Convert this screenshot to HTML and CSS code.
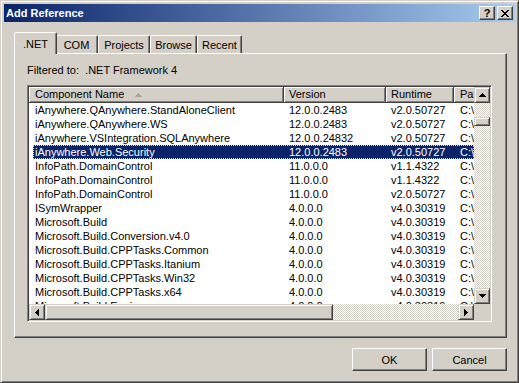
FILE: index.html
```html
<!DOCTYPE html>
<html>
<head>
<meta charset="utf-8">
<title>Add Reference</title>
<link rel="stylesheet" href="styles.css">
</head>
<body>
<div class="window">
  <div class="titlebar">
    <span class="title">Add Reference</span>
    <div class="caption-buttons">
      <div class="cap-btn"><span class="q">?</span></div>
      <div class="cap-btn">
        <svg width="8" height="7" viewBox="0 0 8 7" shape-rendering="crispEdges"><path d="M0 0h2v1H0zM6 0h2v1H6zM1 1h2v1H1zM5 1h2v1H5zM2 2h4v1H2zM3 3h2v1H3zM2 4h4v1H2zM1 5h2v1H1zM5 5h2v1H5zM0 6h2v1H0zM6 6h2v1H6z" fill="#000"/></svg>
      </div>
    </div>
  </div>
  <div class="content">
    <div class="tabs">
      <div class="tab active t-net">.NET</div>
      <div class="tab t-com">COM</div>
      <div class="tab t-proj">Projects</div>
      <div class="tab t-browse">Browse</div>
      <div class="tab t-recent">Recent</div>
    </div>
    <div class="panel">
      <div class="filter">Filtered to:&nbsp; .NET Framework 4</div>
      <div class="listview">
        <div class="lv-content">
          <div class="lv-header">
            <div class="hcell h1">Component Name<svg class="sort" width="7" height="4" viewBox="0 0 7 4" shape-rendering="crispEdges"><path d="M3 0h1v1h1v1h1v1h1v1H0V3h1V2h1V1h1z" fill="#A7A598"/></svg></div>
            <div class="hcell h2">Version</div>
            <div class="hcell h3">Runtime</div>
            <div class="hcell h4">Path</div>
          </div>
          <div class="rows">
            <div class="row"><span class="c1">iAnywhere.QAnywhere.StandAloneClient</span><span class="c2">12.0.0.2483</span><span class="c3">v2.0.50727</span><span class="c4">C:\Program Files\SQL Anywhere 12</span></div>
            <div class="row"><span class="c1">iAnywhere.QAnywhere.WS</span><span class="c2">12.0.0.2483</span><span class="c3">v2.0.50727</span><span class="c4">C:\Program Files\SQL Anywhere 12</span></div>
            <div class="row"><span class="c1">iAnywhere.VSIntegration.SQLAnywhere</span><span class="c2">12.0.0.24832</span><span class="c3">v2.0.50727</span><span class="c4">C:\Program Files\SQL Anywhere 12</span></div>
            <div class="row sel"><span class="c1">iAnywhere.Web.Security</span><span class="c2">12.0.0.2483</span><span class="c3">v2.0.50727</span><span class="c4">C:\Program Files\SQL Anywhere 12</span></div>
            <div class="row"><span class="c1">InfoPath.DomainControl</span><span class="c2">11.0.0.0</span><span class="c3">v1.1.4322</span><span class="c4">C:\Program Files\Microsoft Office</span></div>
            <div class="row"><span class="c1">InfoPath.DomainControl</span><span class="c2">11.0.0.0</span><span class="c3">v1.1.4322</span><span class="c4">C:\Program Files\Microsoft Office</span></div>
            <div class="row"><span class="c1">InfoPath.DomainControl</span><span class="c2">11.0.0.0</span><span class="c3">v2.0.50727</span><span class="c4">C:\Program Files\Microsoft Office</span></div>
            <div class="row"><span class="c1">ISymWrapper</span><span class="c2">4.0.0.0</span><span class="c3">v4.0.30319</span><span class="c4">C:\Windows\Microsoft.NET</span></div>
            <div class="row"><span class="c1">Microsoft.Build</span><span class="c2">4.0.0.0</span><span class="c3">v4.0.30319</span><span class="c4">C:\Windows\Microsoft.NET</span></div>
            <div class="row"><span class="c1">Microsoft.Build.Conversion.v4.0</span><span class="c2">4.0.0.0</span><span class="c3">v4.0.30319</span><span class="c4">C:\Windows\Microsoft.NET</span></div>
            <div class="row"><span class="c1">Microsoft.Build.CPPTasks.Common</span><span class="c2">4.0.0.0</span><span class="c3">v4.0.30319</span><span class="c4">C:\Windows\Microsoft.NET</span></div>
            <div class="row"><span class="c1">Microsoft.Build.CPPTasks.Itanium</span><span class="c2">4.0.0.0</span><span class="c3">v4.0.30319</span><span class="c4">C:\Windows\Microsoft.NET</span></div>
            <div class="row"><span class="c1">Microsoft.Build.CPPTasks.Win32</span><span class="c2">4.0.0.0</span><span class="c3">v4.0.30319</span><span class="c4">C:\Windows\Microsoft.NET</span></div>
            <div class="row"><span class="c1">Microsoft.Build.CPPTasks.x64</span><span class="c2">4.0.0.0</span><span class="c3">v4.0.30319</span><span class="c4">C:\Windows\Microsoft.NET</span></div>
            <div class="row"><span class="c1">Microsoft.Build.Engine</span><span class="c2">4.0.0.0</span><span class="c3">v4.0.30319</span><span class="c4">C:\Windows\Microsoft.NET</span></div>
          </div>
        </div>
        <div class="vscroll">
          <div class="sb-btn"><svg width="7" height="4" viewBox="0 0 7 4" shape-rendering="crispEdges"><path d="M3 0h1v1h1v1h1v1h1v1H0V3h1V2h1V1h1z" fill="#000"/></svg></div>
          <div class="track vtrack"><div class="thumb vthumb"></div></div>
          <div class="sb-btn"><svg width="7" height="4" viewBox="0 0 7 4" shape-rendering="crispEdges"><path d="M0 0h7v1H6v1H5v1H4v1H3V3H2V2H1V1H0z" fill="#000"/></svg></div>
        </div>
        <div class="hscroll">
          <div class="sb-btn"><svg width="4" height="7" viewBox="0 0 4 7" shape-rendering="crispEdges"><path d="M3 0h1v7H3V6H2V5H1V4H0V3h1V2h1V1h1z" fill="#000"/></svg></div>
          <div class="thumb hthumb"></div>
          <div class="track htrack"></div>
          <div class="sb-btn"><svg width="4" height="7" viewBox="0 0 4 7" shape-rendering="crispEdges"><path d="M0 0h1v1h1v1h1v1h1v1H3v1H2v1H1v1H0z" fill="#000"/></svg></div>
        </div>
        <div class="corner"></div>
      </div>
    </div>
    <div class="footer">
      <div class="btn">OK</div>
      <div class="btn">Cancel</div>
    </div>
  </div>
</div>
</body>
</html>
```

FILE: styles.css
```css
* { box-sizing: border-box; }
html, body { margin: 0; padding: 0; }
body {
  width: 519px;
  height: 383px;
  overflow: hidden;
  background: #D4D0C8;
  font-family: "Liberation Sans", Arial, sans-serif;
  font-size: 11px;
  color: #000;
}
.window {
  width: 519px;
  height: 383px;
  border: 1px solid;
  border-color: #D4D0C8 #404040 #404040 #D4D0C8;
  box-shadow: inset 1px 1px #fff, inset -1px -1px #808080;
  padding: 3px;
  display: flex;
  flex-direction: column;
}
.titlebar {
  flex: none;
  height: 18px;
  background: linear-gradient(to right, #0A246A, #A6CAF0);
  display: flex;
  align-items: center;
  padding: 0 2px;
}
.title {
  flex: 1;
  color: #fff;
  font-weight: bold;
  line-height: 18px;
}
.caption-buttons { display: flex; gap: 2px; }
.cap-btn {
  width: 16px;
  height: 14px;
  background: #D4D0C8;
  border: 1px solid;
  border-color: #fff #404040 #404040 #fff;
  box-shadow: inset -1px -1px #808080;
  display: flex;
  align-items: center;
  justify-content: center;
}
.cap-btn .q { font-weight: bold; font-size: 11px; line-height: 11px; }
.content {
  flex: 1;
  display: flex;
  flex-direction: column;
  padding: 10px 8px 8px 10px;
}
.tabs {
  flex: none;
  height: 21px;
  display: flex;
  align-items: flex-end;
  padding-left: 2px;
  position: relative;
  z-index: 1;
}
.tab {
  flex: none;
  height: 18px;
  border: 1px solid;
  border-bottom: none;
  border-color: #fff #404040 transparent #fff;
  box-shadow: inset -1px 0 #808080;
  border-radius: 2px 2px 0 0;
  display: flex;
  align-items: center;
  justify-content: center;
  background: #D4D0C8;
}
.tab.active {
  height: 22px;
  margin: 0 -2px -1px;
  position: relative;
  z-index: 2;
}
.t-net { width: 43px; }
.t-com { width: 43px; }
.t-proj { width: 52px; }
.t-browse { width: 47px; }
.t-recent { width: 45px; }
.panel {
  flex: none;
  height: 285px;
  border: 1px solid;
  border-color: #fff #404040 #404040 #fff;
  box-shadow: inset -1px -1px #808080;
  padding: 10px 14px 0 12px;
  display: flex;
  flex-direction: column;
}
.filter { height: 13px; line-height: 13px; }
.listview {
  margin-top: 8px;
  width: 465px;
  height: 237px;
  border: 1px solid;
  border-color: #808080 #fff #fff #808080;
  box-shadow: inset 1px 1px #404040, inset -1px -1px #D4D0C8;
  padding: 1px;
  display: grid;
  grid-template-columns: 445px 16px;
  grid-template-rows: 217px 16px;
}
.lv-content {
  background: #fff;
  overflow: hidden;
}
.lv-header {
  display: flex;
  height: 16px;
  background: #D4D0C8;
  white-space: nowrap;
}
.hcell {
  flex: none;
  height: 16px;
  line-height: 15px;
  border-right: 1px solid #404040;
  border-bottom: 1px solid #404040;
  box-shadow: inset 1px 1px #fff, inset -1px -1px #808080;
  padding-left: 5px;
  overflow: hidden;
}
.h1 { width: 255px; padding-left: 6px; }
.h2 { width: 102px; }
.h3 { width: 68px; }
.h4 { width: 100px; padding-left: 6px; }
.sort { margin-left: 11px; vertical-align: 1px; }
.rows { white-space: nowrap; }
.row {
  display: flex;
  height: 14px;
  line-height: 14px;
  margin-left: 4px;
}
.row span { flex: none; overflow: hidden; }
.c1 { width: 251px; padding-left: 2px; }
.c2 { width: 102px; padding-left: 5px; }
.c3 { width: 68px; padding-left: 5px; }
.c4 { width: 120px; padding-left: 6px; }
.row.sel {
  background: #0A246A;
  color: #fff;
  outline: 1px dotted #E8CF8A;
  outline-offset: -1px;
}
.vscroll, .hscroll { display: flex; }
.vscroll { flex-direction: column; }
.sb-btn {
  flex: none;
  width: 16px;
  height: 16px;
  background: #D4D0C8;
  border: 1px solid;
  border-color: #D4D0C8 #404040 #404040 #D4D0C8;
  box-shadow: inset 1px 1px #fff, inset -1px -1px #808080;
  display: flex;
  align-items: center;
  justify-content: center;
}
.track {
  flex: 1;
  background: repeating-conic-gradient(#D4D0C8 0 25%, #fff 0 50%) 0 0 / 2px 2px;
}
.vtrack { padding-top: 14px; }
.thumb {
  background: #D4D0C8;
  border: 1px solid;
  border-color: #D4D0C8 #404040 #404040 #D4D0C8;
  box-shadow: inset 1px 1px #fff, inset -1px -1px #808080;
}
.vthumb { width: 16px; height: 9px; }
.hthumb { flex: none; width: 288px; height: 16px; }
.corner { background: #D4D0C8; }
.footer {
  flex: none;
  margin-top: 10px;
  display: flex;
  justify-content: flex-end;
  gap: 5px;
}
.btn {
  width: 75px;
  height: 23px;
  background: #D4D0C8;
  border: 1px solid;
  border-color: #fff #404040 #404040 #fff;
  box-shadow: inset -1px -1px #808080;
  display: flex;
  align-items: center;
  justify-content: center;
}
```
